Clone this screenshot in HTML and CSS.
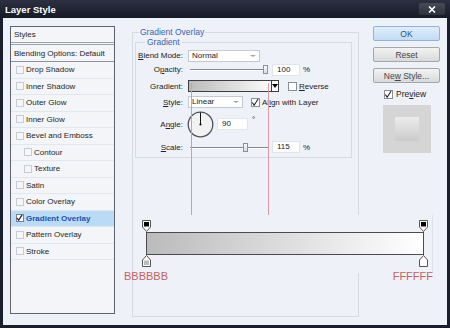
FILE: index.html
```html
<!DOCTYPE html>
<html lang="en">
<head>
    <meta charset="UTF-8">
    <meta name="viewport" content="width=device-width, initial-scale=1.0">
    <title>Layer Style</title>
    <link rel="stylesheet" href="styles.css">
</head>
<body>
    <div class="window">
        <div class="titlebar">
            <span class="title">Layer Style</span>
            <span class="close">
                <svg width="8" height="7" viewBox="0 0 8 7"><path d="M1 0.5 L7 6.5 M7 0.5 L1 6.5" stroke="#fff" stroke-width="1.6"/></svg>
            </span>
        </div>

        <div class="content">
            <ul class="styles">
                <li class="head">Styles</li>
                <li class="blend">Blending Options: Default</li>
                <li><span class="cb"></span>Drop Shadow</li>
                <li><span class="cb"></span>Inner Shadow</li>
                <li><span class="cb"></span>Outer Glow</li>
                <li><span class="cb"></span>Inner Glow</li>
                <li><span class="cb"></span>Bevel and Emboss</li>
                <li class="sub"><span class="cb"></span>Contour</li>
                <li class="sub"><span class="cb"></span>Texture</li>
                <li><span class="cb"></span>Satin</li>
                <li><span class="cb"></span>Color Overlay</li>
                <li class="active">
                    <span class="cb on"><svg width="8" height="8" viewBox="0 0 8 8"><path d="M1 4 L3 6.5 L7 0.5" fill="none" stroke="#222" stroke-width="1.3"/></svg></span>Gradient Overlay
                </li>
                <li><span class="cb"></span>Pattern Overlay</li>
                <li><span class="cb"></span>Stroke</li>
            </ul>

            <fieldset class="group outer">
                <legend>Gradient Overlay</legend>
                <fieldset class="group inner">
                    <legend>Gradient</legend>
                    <div class="form">
                        <label><u>B</u>lend Mode:</label>
                        <div class="ctl"><span class="select blend-sel">Normal</span></div>

                        <label>O<u>p</u>acity:</label>
                        <div class="ctl">
                            <span class="slider"><span class="knob" style="left: 73px"></span></span>
                            <span class="field">100</span><span class="unit">%</span>
                        </div>

                        <label>Gradient:</label>
                        <div class="ctl">
                            <span class="swatch"><span class="ramp"></span><span class="drop"></span></span>
                            <span class="check"></span><span class="opt"><u>R</u>everse</span>
                        </div>

                        <label><u>S</u>tyle:</label>
                        <div class="ctl">
                            <span class="select style-sel">Linear</span>
                            <span class="check ticked"><svg width="9" height="9" viewBox="0 0 9 9"><path d="M1.5 4.5 L3.5 7.5 L8 0.5" fill="none" stroke="#222" stroke-width="1.2"/></svg></span>
                            <span class="opt">Al<u>i</u>gn with Layer</span>
                        </div>

                        <label>A<u>n</u>gle:</label>
                        <div class="ctl">
                            <svg class="dial" width="27" height="27" viewBox="0 0 27 27">
                                <circle cx="13.5" cy="13.5" r="12.3" fill="#f2f2f3" stroke="#4d5160" stroke-width="1.3"/>
                                <line x1="13.5" y1="13.5" x2="13.5" y2="1.5" stroke="#111" stroke-width="1"/>
                                <circle cx="13.5" cy="13.5" r="1.1" fill="#111"/>
                            </svg>
                            <span class="field angle">90</span><span class="deg">°</span>
                        </div>

                        <label><u>S</u>cale:</label>
                        <div class="ctl">
                            <span class="slider"><span class="knob" style="left: 53px"></span></span>
                            <span class="field">115</span><span class="unit">%</span>
                        </div>
                    </div>
                </fieldset>
            </fieldset>

            <div class="side">
                <button class="btn ok">OK</button>
                <button class="btn">Reset</button>
                <button class="btn">Ne<u>w</u> Style...</button>
                <div class="preview-row">
                    <span class="check ticked"><svg width="9" height="9" viewBox="0 0 9 9"><path d="M1.5 4.5 L3.5 7.5 L8 0.5" fill="none" stroke="#222" stroke-width="1.2"/></svg></span>
                    <span>Pre<u>v</u>iew</span>
                </div>
                <div class="preview"><div class="thumb"></div></div>
            </div>
        </div>

        <!-- annotation: guides from the swatch down to the enlarged gradient -->
        <span class="guide g1"></span>
        <span class="guide g2"></span>

        <div class="annot">
            <div class="stops">
                <svg width="9" height="12" viewBox="0 0 9 12"><path d="M0.5 0.5 H8.5 V7 L4.5 11.5 L0.5 7 Z" fill="#fff" stroke="#555"/><rect x="2" y="2" width="5" height="4.5" fill="#000"/></svg>
                <svg width="9" height="12" viewBox="0 0 9 12"><path d="M0.5 0.5 H8.5 V7 L4.5 11.5 L0.5 7 Z" fill="#fff" stroke="#555"/><rect x="2" y="2" width="5" height="4.5" fill="#000"/></svg>
            </div>
            <div class="bar"></div>
            <div class="stops">
                <svg width="9" height="12" viewBox="0 0 9 12"><path d="M4.5 0.5 L8.5 5 V11.5 H0.5 V5 Z" fill="#fff" stroke="#555"/><rect x="2" y="5.5" width="5" height="4.5" fill="#bbb"/></svg>
                <svg width="9" height="12" viewBox="0 0 9 12"><path d="M4.5 0.5 L8.5 5 V11.5 H0.5 V5 Z" fill="#fff" stroke="#555"/><rect x="2" y="5.5" width="5" height="4.5" fill="#fff"/></svg>
            </div>
            <div class="labels">
                <span>BBBBBB</span>
                <span>FFFFFF</span>
            </div>
        </div>
    </div>
</body>
</html>
```

FILE: styles.css
```css
* {
    margin: 0;
    padding: 0;
    box-sizing: border-box;
}
body {
    background-color: #1b1f2d;
    font-family: "Liberation Sans", Arial, sans-serif;
    font-size: 8px;
    color: #222;
}
u {
    text-decoration: underline;
    text-underline-offset: 1px;
}
.window {
    position: relative;
    width: 450px;
    height: 328px;
    display: flex;
    flex-direction: column;
    background-color: #1b1f2d;
}
.titlebar {
    height: 18px;
    display: flex;
    align-items: center;
    justify-content: space-between;
    padding: 0 5px;
    background: linear-gradient(#2b3042, #171b27);
}
.title {
    color: #fff;
    font-weight: bold;
    font-size: 9.5px;
}
.close {
    width: 26px;
    height: 12px;
    border-radius: 2px;
    background: linear-gradient(#474b56, #2e323c);
    display: flex;
    align-items: center;
    justify-content: center;
}
.content {
    flex: 1;
    margin: 0 3px 3px;
    padding: 8px 7px 0;
    display: flex;
    align-items: flex-start;
    background-color: #eef1f7;
}

/* styles list */
.styles {
    list-style: none;
    width: 105px;
    height: 288px;
    border: 1px solid #5f636d;
    background-color: #f3f5f9;
}
.styles li {
    height: 16.5px;
    display: flex;
    align-items: center;
    padding-left: 5px;
    border-bottom: 1px solid #e2e6ed;
    color: #262626;
}
.styles .head {
    height: 18px;
    padding-left: 3px;
    border-bottom: 3px double #9ea2aa;
}
.styles .blend {
    height: 17px;
    padding-left: 3px;
    border-bottom: 1px solid #8f939c;
}
.styles .sub {
    padding-left: 13px;
}
.styles .active {
    background-color: #b9dbf6;
    color: #1d4fae;
    font-weight: bold;
}
.cb {
    width: 8px;
    height: 8px;
    margin-right: 2px;
    border: 1px solid #c8ccd4;
    background-color: #f5f6f9;
    display: flex;
}
.cb.on {
    border-color: #7c808a;
    background-color: #fff;
}
.cb svg {
    margin: -1px 0 0 -1px;
}

/* group boxes */
.group {
    border: 1px solid #d6dae2;
}
.group legend {
    font-size: 8.5px;
    line-height: 10px;
    color: #3566b4;
}
.outer {
    width: 227px;
    height: 290px;
    margin: 1px 14px 0 17px;
    padding: 0;
}
.outer legend {
    margin-left: 6px;
    padding: 0 1px;
}
.inner {
    margin: 0 6px 0 2px;
    padding: 0;
}
.inner legend {
    margin-left: 9px;
    padding: 0 2px;
}
.form {
    display: grid;
    grid-template-columns: 46px 1fr;
    grid-template-rows: 14px 14px 19px 13px 31px 15px;
    column-gap: 5px;
    align-items: center;
    padding: 1.5px 0 2px 1px;
}
.form label {
    text-align: right;
    white-space: nowrap;
}
.ctl {
    display: flex;
    align-items: center;
}
.select {
    position: relative;
    height: 12px;
    line-height: 10px;
    padding-left: 3px;
    border: 1px solid #c4c9d3;
    background-color: #fff;
}
.select::after {
    content: "";
    position: absolute;
    right: 3px;
    top: 4px;
    border: 3px solid transparent;
    border-top: 2px solid #9ea5b1;
}
.blend-sel {
    width: 72px;
}
.style-sel {
    width: 55px;
}
.slider {
    position: relative;
    width: 78px;
    height: 9px;
    margin-left: 2px;
}
.slider::before {
    content: "";
    position: absolute;
    left: 0;
    right: 0;
    top: 4px;
    height: 1px;
    background-color: #858993;
    box-shadow: 0 1px 0 #fff;
}
.knob {
    position: absolute;
    top: 0;
    width: 5px;
    height: 9px;
    border: 1px solid #8d919a;
    background: linear-gradient(#fbfbfb, #d9dbdf);
}
.field {
    width: 28px;
    height: 12px;
    margin-left: 4px;
    padding-left: 4px;
    line-height: 10px;
    border: 1px solid #e0e4eb;
    background-color: #fff;
}
.unit {
    margin-left: 3px;
}
.swatch {
    display: flex;
    width: 91px;
    height: 12px;
    border: 1px solid #3d3d3d;
}
.ramp {
    flex: 1;
    background: linear-gradient(to right, #bbbbbb, #fbfbfb);
}
.drop {
    position: relative;
    width: 7px;
    border-left: 1px solid #3d3d3d;
    background-color: #fff;
}
.drop::after {
    content: "";
    position: absolute;
    left: 0;
    top: 3px;
    border: 3px solid transparent;
    border-top: 4px solid #000;
}
.check {
    width: 9px;
    height: 9px;
    margin-left: 9px;
    border: 1px solid #8a8e97;
    background-color: #fff;
    display: flex;
}
.check svg {
    margin: -1px 0 0 -1px;
}
.style-sel + .check {
    margin-left: 8px;
}
.opt {
    margin-left: 2px;
}
.dial {
    margin-left: -1px;
}
.field.angle {
    width: 31px;
    margin-left: 3px;
}
.deg {
    align-self: flex-start;
    margin: 4px 0 0 4px;
}

/* buttons column */
.side {
    width: 67px;
    display: flex;
    flex-direction: column;
    gap: 6px;
}
.btn {
    height: 15px;
    font-family: inherit;
    font-size: 8.5px;
    color: #444;
    border: 1px solid #a3a6ab;
    border-radius: 2px;
    background: linear-gradient(#f3f3f3, #d8d9db);
}
.btn.ok {
    color: #2c4f86;
    border-color: #8fb3da;
    background: linear-gradient(#dfeefc, #c2dbf4);
}
.preview-row {
    height: 10px;
    display: flex;
    align-items: center;
    gap: 3px;
    padding-left: 11px;
    font-size: 8.5px;
}
.preview-row .check {
    margin-left: 0;
}
.preview {
    width: 48px;
    height: 48px;
    margin: 0 auto;
    display: flex;
    align-items: center;
    justify-content: center;
    background-color: #d5d5d6;
}
.thumb {
    width: 24px;
    height: 24px;
    background: linear-gradient(#ececec, #cbcbcb);
}

/* annotation overlay */
.guide {
    position: absolute;
    top: 83px;
    width: 1px;
    height: 132px;
    background-color: #dc9a9c;
}
.g1 {
    left: 191px;
}
.g2 {
    left: 268px;
}
.annot {
    position: absolute;
    left: 138px;
    top: 215px;
    width: 295px;
    height: 58px;
    padding: 5px 0 0 4px;
    background-color: #eef1f7;
    border-right: 1px solid #dde1e9;
}
.stops {
    width: 286px;
    display: flex;
    justify-content: space-between;
}
.stops svg {
    display: block;
}
.bar {
    width: 278px;
    height: 23px;
    margin-left: 4px;
    border: 1px solid #4b4b4b;
    background: linear-gradient(to right, #bbbbbb, #ffffff);
}
.labels {
    width: 309px;
    margin: 3px 0 0 -18px;
    display: flex;
    justify-content: space-between;
    font-size: 11px;
    line-height: 12px;
    color: #c65f60;
}
```
